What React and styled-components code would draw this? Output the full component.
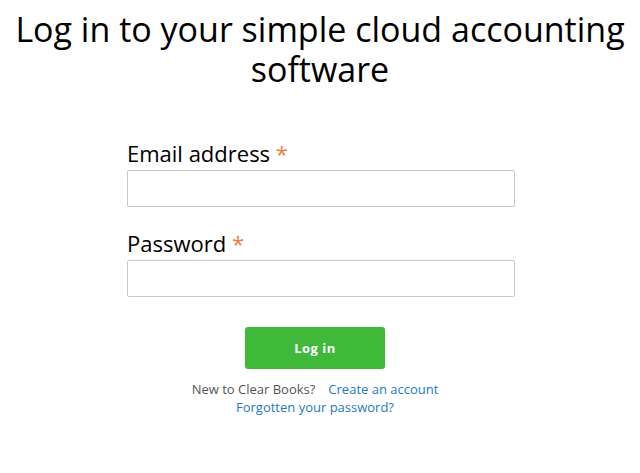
import React from "react";
import styled, { createGlobalStyle } from "styled-components";

const Global = createGlobalStyle`
  html, body { margin: 0; padding: 0; background: #fff; }
  body { font-family: "Open Sans", "Noto Sans", sans-serif; color: #000; }
`;

const Page = styled.div`
  width: 640px;
  box-sizing: border-box;
  padding-left: 2px;
  display: flex;
  flex-direction: column;
  align-items: center;
`;

const Title = styled.h1`
  margin: 9px 0 0 -2px;
  font-size: 34px;
  line-height: 40px;
  font-weight: 400;
  text-align: center;
  color: #000;
`;

const Form = styled.form`
  width: 388px;
  margin-top: 50px;
  display: flex;
  flex-direction: column;
`;

const Field = styled.div`
  display: flex;
  flex-direction: column;
  margin-bottom: ${(p) => p.$mb || 0}px;
`;

const Label = styled.label`
  font-size: 22px;
  line-height: 28px;
  color: #000;
  margin-bottom: 3px;
`;

const Required = styled.span`
  color: #f07b3f;
`;

const Input = styled.input`
  box-sizing: border-box;
  width: 388px;
  height: 37px;
  border: 1px solid #c8c8c8;
  border-radius: 2px;
  background: #fff;
  padding: 0 8px;
  font-family: inherit;
  font-size: 14px;
  outline: none;
`;

const Actions = styled.div`
  display: flex;
  flex-direction: column;
  align-items: center;
  margin-top: 30px;
  padding-right: 12px;
`;

const Button = styled.button`
  width: 140px;
  height: 42px;
  border: none;
  border-radius: 3px;
  background: #40b93a;
  color: #fff;
  font-family: inherit;
  font-size: 13px;
  font-weight: 700;
  letter-spacing: 0.5px;
  cursor: pointer;
`;

const Help = styled.div`
  margin-top: 11px;
  font-size: 13px;
  line-height: 18px;
  text-align: center;
  color: #555;
`;

const Line = styled.div`
  display: flex;
  justify-content: center;
  gap: 13px;
`;

const Link = styled.a`
  color: #1a7bc4;
  text-decoration: none;
`;

export default function App() {
  return (
    <>
      <Global />
      <Page>
        <Title>
          Log in to your simple cloud accounting
          <br />
          software
        </Title>
        <Form onSubmit={(e) => e.preventDefault()}>
          <Field $mb={22}>
            <Label htmlFor="email">
              Email address <Required>*</Required>
            </Label>
            <Input id="email" type="email" />
          </Field>
          <Field>
            <Label htmlFor="password">
              Password <Required>*</Required>
            </Label>
            <Input id="password" type="password" />
          </Field>
          <Actions>
            <Button type="submit">Log in</Button>
            <Help>
              <Line>
                <span>New to Clear Books?</span>
                <Link href="#">Create an account</Link>
              </Line>
              <Line>
                <Link href="#">Forgotten your password?</Link>
              </Line>
            </Help>
          </Actions>
        </Form>
      </Page>
    </>
  );
}
